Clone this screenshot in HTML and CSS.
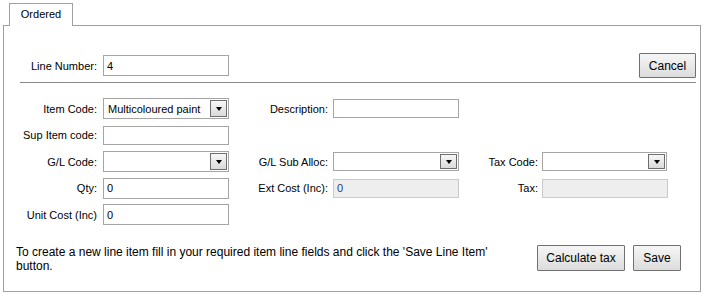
FILE: index.html
```html
<!DOCTYPE html>
<html>
<head>
<meta charset="utf-8">
<title>Line Item</title>
<link rel="stylesheet" href="styles.css">
</head>
<body>
<div class="tabs"><div class="tab">Ordered</div></div>
<div class="panel">
  <div class="head">
    <label class="lbl l1">Line Number:</label>
    <input class="txt" type="text" value="4">
    <button class="btn btn-cancel">Cancel</button>
  </div>
  <div class="rule"></div>

  <div class="form">
    <label class="lbl l1">Item Code:</label>
    <div class="combo"><span class="combo-val">Multicoloured paint</span><span class="combo-btn"><i class="arrow"></i></span></div>
    <label class="lbl l2">Description:</label>
    <input class="txt txt-s" type="text" value="">
    <span></span><span></span>

    <label class="lbl l1">Sup Item code:</label>
    <input class="txt txt-s" type="text" value="">
    <span></span><span></span><span></span><span></span>

    <label class="lbl l1">G/L Code:</label>
    <div class="combo"><span class="combo-val"></span><span class="combo-btn"><i class="arrow"></i></span></div>
    <label class="lbl l2">G/L Sub Alloc:</label>
    <div class="combo combo-s"><span class="combo-val"></span><span class="combo-btn"><i class="arrow"></i></span></div>
    <label class="lbl l3">Tax Code:</label>
    <div class="combo combo-s"><span class="combo-val"></span><span class="combo-btn"><i class="arrow"></i></span></div>

    <label class="lbl l1">Qty:</label>
    <input class="txt" type="text" value="0">
    <label class="lbl l2">Ext Cost (Inc):</label>
    <input class="txt txt-s txt-off" type="text" value="0" disabled>
    <label class="lbl l3">Tax:</label>
    <input class="txt txt-s txt-off" type="text" value="" disabled>

    <label class="lbl l1">Unit Cost (Inc)</label>
    <input class="txt" type="text" value="0">
    <span></span><span></span><span></span><span></span>
  </div>

  <div class="foot">
    <p class="hint">To create a new line item fill in your required item line fields and click the 'Save Line Item' button.</p>
    <div class="actions">
      <button class="btn btn-calc">Calculate tax</button>
      <button class="btn btn-save">Save</button>
    </div>
  </div>
</div>
</body>
</html>
```

FILE: styles.css
```css
body {margin:0;background:#fff;color:#000;font:11px "Liberation Sans", Arial, sans-serif;}

.tabs {display:flex;padding:3px 0 0 9px;}
.tab {position:relative;width:64px;height:23px;box-sizing:border-box;border:1px solid #a0a0a0;border-bottom:0;background:#fff;text-align:center;line-height:21px;margin-bottom:-1px;}

.panel {margin-left:3px;width:698px;height:267px;box-sizing:border-box;border:1px solid #a0a0a0;}

.head {display:flex;align-items:center;padding:27px 4px 0 0;}
.rule {height:1px;background:#8a8a8a;margin:4px 4px 0 16px;}

.lbl {display:block;text-align:right;white-space:nowrap;}
.l1 {width:99px;padding-right:6px;box-sizing:border-box;}
.l2 {padding-right:5px;}
.l3 {padding-right:4px;}

.txt {width:126px;height:21px;box-sizing:border-box;margin:0;padding:0 3px;border:1px solid #a5a5a5;font:11px "Liberation Sans", Arial, sans-serif;color:#000;background:#fff;}
.txt-s {height:19px;}
.txt-off {background:#eeeeee;border-color:#cacaca;color:#1f3f7a;-webkit-text-fill-color:#1f3f7a;opacity:1;}

.form {display:grid;grid-template-columns:99px 126px 104px 126px 83px 125px;grid-auto-rows:21px;row-gap:5.5px;align-items:center;margin-top:15px;}
.form .txt-off:last-child, .form .combo-s:nth-child(15) {width:125px;}

.combo {display:flex;align-items:center;height:21px;box-sizing:border-box;border:1px solid #a5a5a5;padding:0 1px 0 4px;background:#fff;}
.combo-s {height:19px;}
.combo-val {flex:1;white-space:nowrap;overflow:hidden;}
.combo-btn {display:flex;align-items:center;justify-content:center;width:15px;height:15px;border:1px solid #6e6e6e;background:linear-gradient(#f7f7f7,#dadada);}
.combo-s .combo-btn {height:13px;}
.arrow {width:0;height:0;border-left:3.5px solid transparent;border-right:3.5px solid transparent;border-top:4px solid #000;}

.btn {height:26px;box-sizing:border-box;margin:0;padding:0;border:1px solid #707070;border-radius:1px;background:linear-gradient(#f6f6f6,#dcdcdc);font:12px "Liberation Sans", Arial, sans-serif;color:#000;cursor:pointer;}
.btn-cancel {width:57px;height:25px;margin-left:auto;}
.btn-calc {width:88px;}
.btn-save {width:48px;margin-left:8px;}

.foot {display:flex;align-items:flex-start;margin-top:20px;padding-left:12px;}
.hint {width:490px;margin:0;font-size:12px;line-height:14px;}
.actions {display:flex;margin-left:auto;margin-right:19px;}
```
